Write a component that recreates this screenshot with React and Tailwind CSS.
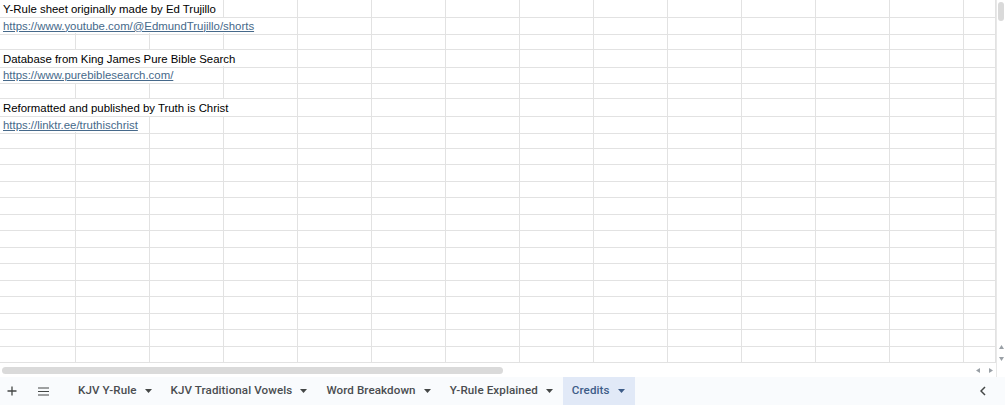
import React from "react";

const COLS = 13;
const ROWS = 22;

const content = {
  0: { text: "Y-Rule sheet originally made by Ed Trujillo", span: 3 },
  1: { text: "https://www.youtube.com/@EdmundTrujillo/shorts", span: 4, link: true },
  3: { text: "Database from King James Pure Bible Search", span: 4 },
  4: { text: "https://www.purebiblesearch.com/", span: 3, link: true },
  6: { text: "Reformatted and published by Truth is Christ", span: 4 },
  7: { text: "https://linktr.ee/truthischrist", span: 2, link: true },
};

function Row({ r }) {
  const c = content[r];
  const cells = [];
  let start = 0;
  if (c) {
    cells.push(
      <div
        key="t"
        style={{ gridColumn: `span ${c.span} / span ${c.span}` }}
        className="border-r border-b border-[#e2e2e2] pl-[3px] pt-[2px] leading-[15px] text-[11.4px] whitespace-nowrap overflow-visible"
      >
        {c.link ? (
          <span className="text-[#46698a] underline underline-offset-[1px]">{c.text}</span>
        ) : (
          <span className="text-black">{c.text}</span>
        )}
      </div>
    );
    start = c.span;
  }
  for (let i = start; i < COLS + 1; i++) {
    cells.push(<div key={i} className="border-r border-b border-[#e2e2e2]" />);
  }
  return (
    <div className="grid grid-cols-[76px_repeat(12,74px)_1fr] h-[16.5px]">{cells}</div>
  );
}

function Caret({ className = "" }) {
  return (
    <svg width="7" height="4" viewBox="0 0 7 4" className={className}>
      <path d="M0 0h7L3.5 4z" fill="currentColor" />
    </svg>
  );
}

function Tab({ label, active }) {
  return (
    <div
      className={
        "flex items-center h-full pl-[9px] pr-[10px] gap-[8px] text-[11.6px] tracking-[0.1px] font-medium " +
        (active ? "bg-[#e1e9f7] text-[#3d5c88]" : "text-[#4a4d50]")
      }
    >
      <span>{label}</span>
      <Caret className={active ? "text-[#3d5c88]" : "text-[#444746]"} />
    </div>
  );
}

export default function App() {
  return (
    <div
      className="w-[1005px] h-[405px] bg-white flex flex-col overflow-hidden"
      style={{ fontFamily: "'Liberation Sans', Arial, sans-serif" }}
    >
      <div className="flex h-[377px]">
        <div className="w-[996px] flex flex-col">
          <div className="h-[363px] overflow-hidden">
            {Array.from({ length: ROWS }).map((_, r) => (
              <Row key={r} r={r} />
            ))}
          </div>
          <div className="flex-1 flex items-center relative">
            <div className="ml-[2px] w-[501px] h-[7px] rounded-full bg-[#dadada]" />
            <div className="absolute right-[3px] top-[5px] flex gap-[9px] text-[#9aa0a6]">
              <svg width="4" height="5" viewBox="0 0 4 5"><path d="M4 0v5L0 2.5z" fill="currentColor" /></svg>
              <svg width="4" height="5" viewBox="0 0 4 5"><path d="M0 0v5l4-2.5z" fill="currentColor" /></svg>
            </div>
          </div>
        </div>
        <div className="flex-1 border-l border-[#e8e8e8] flex flex-col items-center relative">
          <div className="mt-[2px] w-[6px] h-[19px] rounded-full bg-[#dadada]" />
          <div className="absolute top-[345px] left-[2px] flex flex-col gap-[8px] text-[#9aa0a6]">
            <svg width="5" height="4" viewBox="0 0 5 4"><path d="M0 4h5L2.5 0z" fill="currentColor" /></svg>
            <svg width="5" height="4" viewBox="0 0 5 4"><path d="M0 0h5L2.5 4z" fill="currentColor" /></svg>
          </div>
        </div>
      </div>
      <div
        className="h-[28px] bg-[#f9fbfd] flex items-center"
        style={{ fontFamily: "Roboto, 'Liberation Sans', sans-serif" }}
      >
        <div className="w-[24px] flex justify-center text-[#444746]">
          <svg width="10" height="10" viewBox="0 0 10 10">
            <path d="M5 0.5v9M0.5 5h9" stroke="currentColor" strokeWidth="1.3" />
          </svg>
        </div>
        <div className="ml-[7px] w-[24px] flex justify-center text-[#444746]">
          <svg width="11" height="9" viewBox="0 0 11 9">
            <path d="M0 1h11M0 4.5h11M0 8h11" stroke="currentColor" strokeWidth="1.2" />
          </svg>
        </div>
        <div className="ml-[14px] flex h-full">
          <Tab label="KJV Y-Rule" />
          <Tab label="KJV Traditional Vowels" />
          <Tab label="Word Breakdown" />
          <Tab label="Y-Rule Explained" />
          <Tab label="Credits" active />
        </div>
        <div className="ml-auto mr-[19px] text-[#444746]">
          <svg width="6" height="10" viewBox="0 0 6 10">
            <path d="M5 1L1 5l4 4" stroke="currentColor" strokeWidth="1.5" fill="none" />
          </svg>
        </div>
      </div>
    </div>
  );
}
